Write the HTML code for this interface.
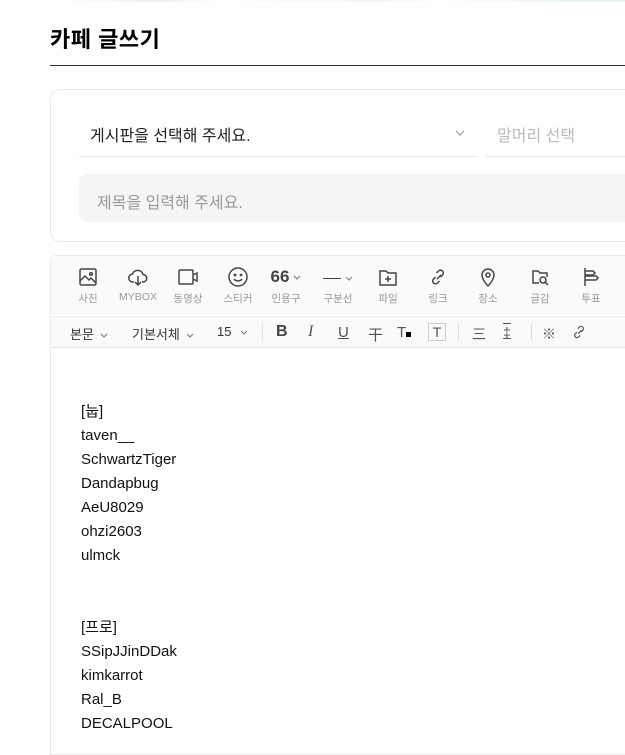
<!DOCTYPE html>
<html><head><meta charset="utf-8"><style>
*{margin:0;padding:0;box-sizing:border-box}
body{width:625px;height:735px;overflow:hidden;background:#fff;font-family:"Liberation Sans","Noto Sans CJK KR",sans-serif;color:#000;position:relative}
.a{position:absolute;white-space:nowrap}
.topbar{position:absolute;left:0;top:0;width:625px;height:2px;background:linear-gradient(90deg,#fff 10%,#efecfb 25%,#fff 35%,#eef6fc 60%,#fff 70%,#e8f4fc 90%)}
h1{position:absolute;left:50px;top:22px;font-size:22px;font-weight:bold;letter-spacing:0.5px}
.hr{position:absolute;left:50px;top:65px;width:575px;height:1px;background:#333}
.card{position:absolute;left:50px;top:89px;width:600px;height:153px;border:1px solid #ebebeb;border-radius:10px}
.ed{position:absolute;left:50px;top:255px;width:600px;height:500px;border:1px solid #ebebeb;border-top-left-radius:6px}
.tb1{position:absolute;left:51px;top:256px;width:574px;height:59px;background:#fafafa}
.tb2{position:absolute;left:51px;top:316px;width:574px;height:32px;background:#fafafa;border-top:1px solid #eee;border-bottom:1px solid #e3e3e3}
.ic{position:absolute;top:266px;width:50px;text-align:center}
.ic svg{width:22px;height:22px;display:block;margin:0 auto}
.ic span{display:block;font-size:10.5px;color:#999;margin-top:3px}
.t2{position:absolute;top:324px;font-size:13px;color:#333}
.cv{display:inline-block;vertical-align:middle;margin-left:3px}
.ct{position:absolute;left:81px;top:400px;font-size:15px;line-height:24px;color:#111}
</style></head><body>
<div class="topbar"></div>
<h1>카페 글쓰기</h1>
<div class="hr"></div>
<div class="card"></div>
<div class="a" style="left:90px;top:122px;font-size:16px;color:#222">게시판을 선택해 주세요.</div>
<svg class="a" style="left:455px;top:130px" width="10" height="6" viewBox="0 0 10 6"><path d="M1 1l4 4 4-4" fill="none" stroke="#999" stroke-width="1.2"/></svg>
<div class="a" style="left:79px;top:156px;width:397px;height:1px;background:#e8e8e8"></div>
<div class="a" style="left:497px;top:122px;font-size:16px;color:#bbb">말머리 선택</div>
<div class="a" style="left:486px;top:156px;width:139px;height:1px;background:#e8e8e8"></div>
<div class="a" style="left:79px;top:174px;width:560px;height:48px;background:#f4f5f7;border-radius:8px"></div>
<div class="a" style="left:97px;top:189px;font-size:16px;color:#999">제목을 입력해 주세요.</div>
<div class="ed"></div>
<div class="tb1"></div>
<div class="tb2"></div>
<div class="ic" style="left:63px"><svg viewBox="0 0 22 22" fill="none" stroke="#444" stroke-width="1.5"><rect x="3" y="3" width="16" height="16" rx="1.5"/><path d="M3 15l5-5 4 4 2-2 5 5"/><circle cx="14" cy="8" r="1.3"/></svg><span>사진</span></div>
<div class="ic" style="left:113px"><svg viewBox="0 0 22 22" fill="none" stroke="#444" stroke-width="1.5"><path d="M7 16H6a4 4 0 0 1-.5-8A5.5 5.5 0 0 1 16 8.5a3.7 3.7 0 0 1 0 7.5h-1"/><path d="M11 10v9M8 16l3 3 3-3"/></svg><span>MYBOX</span></div>
<div class="ic" style="left:163px"><svg viewBox="0 0 22 22" fill="none" stroke="#444" stroke-width="1.5"><rect x="2" y="4" width="14" height="14" rx="1"/><path d="M16 9l4-2v8l-4-2"/></svg><span>동영상</span></div>
<div class="ic" style="left:213px"><svg viewBox="0 0 22 22" fill="none" stroke="#444" stroke-width="1.5"><circle cx="11" cy="11" r="9"/><path d="M7 13c2 2.5 6 2.5 8 0"/><circle cx="8" cy="9" r=".6" fill="#444"/><circle cx="14" cy="9" r=".6" fill="#444"/></svg><span>스티커</span></div>
<div class="ic" style="left:261px"><div style="font-size:17px;font-weight:bold;color:#444;height:22px;line-height:22px">66<svg class="cv" width="8" height="5" viewBox="0 0 8 5" style="display:inline-block;width:8px;height:5px;margin-left:4px"><path d="M1 1l3 3 3-3" fill="none" stroke="#777" stroke-width="1"/></svg></div><span>인용구</span></div>
<div class="ic" style="left:313px"><div style="height:22px;line-height:22px;color:#444;font-size:14px"><span style="display:inline-block;width:18px;height:1.5px;background:#444;vertical-align:middle;margin:0"></span><svg class="cv" width="8" height="5" viewBox="0 0 8 5" style="display:inline-block;width:8px;height:5px;margin-left:4px"><path d="M1 1l3 3 3-3" fill="none" stroke="#777" stroke-width="1"/></svg></div><span>구분선</span></div>
<div class="ic" style="left:363px"><svg viewBox="0 0 22 22" fill="none" stroke="#444" stroke-width="1.5"><path d="M3 5h6l2 2h8v12H3z"/><path d="M11 10v6M8 13h6"/></svg><span>파일</span></div>
<div class="ic" style="left:413px"><svg viewBox="0 0 22 22" fill="none" stroke="#444" stroke-width="1.5"><path d="M10 13l4-4M8.5 11l-2 2a2.8 2.8 0 0 0 4 4l2-2M13.5 11l2-2a2.8 2.8 0 0 0-4-4l-2 2"/></svg><span>링크</span></div>
<div class="ic" style="left:463px"><svg viewBox="0 0 22 22" fill="none" stroke="#444" stroke-width="1.5"><path d="M11 20s-6-6-6-11a6 6 0 0 1 12 0c0 5-6 11-6 11z"/><circle cx="11" cy="9" r="2"/></svg><span>장소</span></div>
<div class="ic" style="left:515px"><svg viewBox="0 0 22 22" fill="none" stroke="#444" stroke-width="1.5"><path d="M10 17H4V5h5l2 2h7v4"/><circle cx="14" cy="14" r="3"/><path d="M16 16l3 3"/></svg><span>글감</span></div>
<div class="ic" style="left:566px"><svg viewBox="0 0 22 22" fill="none" stroke="#444" stroke-width="1.5"><path d="M5 2v18M5 5h8l2 2-2 2H5M5 10h11l2 2-2 2H5"/></svg><span>투표</span></div>
<div class="t2" style="left:70px">본문<svg class="cv" width="8" height="5" viewBox="0 0 8 5" style="margin-left:6px"><path d="M1 1l3 3 3-3" fill="none" stroke="#777" stroke-width="1"/></svg></div>
<div class="t2" style="left:132px">기본서체<svg class="cv" width="8" height="5" viewBox="0 0 8 5" style="margin-left:6px"><path d="M1 1l3 3 3-3" fill="none" stroke="#777" stroke-width="1"/></svg></div>
<div class="t2" style="left:217px">15<svg class="cv" width="8" height="5" viewBox="0 0 8 5" style="margin-left:9px"><path d="M1 1l3 3 3-3" fill="none" stroke="#777" stroke-width="1"/></svg></div>
<div class="a" style="left:262px;top:324px;width:1px;height:16px;background:#ddd"></div>
<div class="t2" style="left:276px;font-size:16px;font-weight:bold;top:323px;color:#444">B</div>
<div class="t2" style="left:308px;font-size:16px;font-style:italic;top:323px;font-family:'Liberation Serif',serif;color:#555">I</div>
<div class="t2" style="left:338px;font-size:15px;text-decoration:underline;top:324px;color:#555">U</div>
<div class="t2" style="left:368px;font-size:15px;top:324px;color:#555">干</div>
<div class="t2" style="left:397px;font-size:15px;top:324px;color:#555">T<span style="display:inline-block;width:5px;height:5px;background:#000"></span></div>
<div class="a" style="left:428px;top:323px;width:18px;height:18px;border:1px solid #ccc;font-size:14px;text-align:center;line-height:16px;color:#555">T</div>
<div class="a" style="left:458px;top:324px;width:1px;height:16px;background:#ddd"></div>
<div class="t2" style="left:472px;font-size:14px;color:#555">三</div>
<div class="t2" style="left:503px;font-size:14px;color:#555;text-decoration:overline underline">‡</div>
<div class="a" style="left:531px;top:324px;width:1px;height:16px;background:#ddd"></div>
<div class="t2" style="left:542px;font-size:14px;color:#555">※</div>
<svg class="a" style="left:570px;top:323px" width="18" height="18" viewBox="0 0 22 22" fill="none" stroke="#555" stroke-width="1.5"><path d="M10 13l4-4M8.5 11l-2 2a2.8 2.8 0 0 0 4 4l2-2M13.5 11l2-2a2.8 2.8 0 0 0-4-4l-2 2"/></svg>
<div class="ct">[눕]<br>taven__<br>SchwartzTiger<br>Dandapbug<br>AeU8029<br>ohzi2603<br>ulmck<br><br><br>[프로]<br>SSipJJinDDak<br>kimkarrot<br>Ral_B<br>DECALPOOL</div>
</body></html>
